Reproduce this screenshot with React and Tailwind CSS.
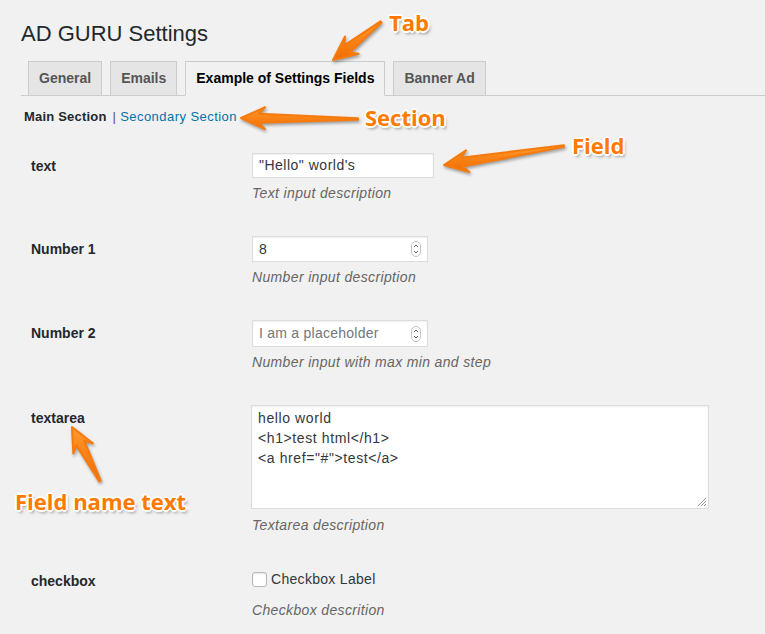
import React from 'react';

const font = 'font-["Liberation_Sans",Arial,sans-serif]';
const noteText =
	'absolute font-["Open_Sans",sans-serif] font-bold text-[22px] leading-none text-[#ff7a00] [text-shadow:1px_1px_0_#fff,-1px_-1px_0_#fff,1px_-1px_0_#fff,-1px_1px_0_#fff,0_2px_0_#fff,2px_0_0_#fff,0_-2px_0_#fff,-2px_0_0_#fff,2px_3px_3px_rgba(0,0,0,0.35)]';

// tapered arrow from a thin tail to a swept head at the tip
function arrowPoints(tx, ty, px, py) {
	const dx = px - tx;
	const dy = py - ty;
	const len = Math.hypot(dx, dy);
	const ux = dx / len;
	const uy = dy / len;
	const nx = -uy;
	const ny = ux;
	const L = 18, H = 11, S = 4.5, T = 0.8, back = 6;
	const pts = [
		[tx + nx * T, ty + ny * T],
		[px - ux * L + nx * S, py - uy * L + ny * S],
		[px - ux * (L + back) + nx * H, py - uy * (L + back) + ny * H],
		[px, py],
		[px - ux * (L + back) - nx * H, py - uy * (L + back) - ny * H],
		[px - ux * L - nx * S, py - uy * L - ny * S],
		[tx - nx * T, ty - ny * T],
	];
	return pts.map(p => p.map(v => v.toFixed(1)).join(',')).join(' ');
}

const arrows = [
	[381, 22, 333, 60],
	[358, 119, 241, 118],
	[564, 146, 444, 165],
	[100, 481, 72, 427],
];

function Spinner() {
	return (
		<svg width="10" height="16" viewBox="0 0 10 16" className="shrink-0">
			<rect x="0.5" y="0.5" width="9" height="15" rx="4.5" fill="#fff" stroke="#c4c4c4" />
			<path d="M3 6 L5 4 L7 6" fill="none" stroke="#666" strokeWidth="1" />
			<path d="M3 10 L5 12 L7 10" fill="none" stroke="#666" strokeWidth="1" />
		</svg>
	);
}

function Desc({ children, className = 'mt-[5px]' }) {
	return <p className={`${className} leading-[20px] text-[14px] italic text-[#666] tracking-[0.35px]`}>{children}</p>;
}

function Row({ label, top, children }) {
	return (
		<div className={`flex ${top}`}>
			<div className="w-[221px] shrink-0 text-[14px] font-bold leading-[26px] text-[#23282d]">{label}</div>
			<div>{children}</div>
		</div>
	);
}

export default function App() {
	return (
		<div className={`relative min-h-screen w-full overflow-hidden bg-[#f1f1f1] ${font} text-[#23282d]`}>
			<h1 className="pl-[21px] pt-[19px] text-[22px] font-normal leading-[29px] text-[#23282d]">AD GURU Settings</h1>

			<nav className="ml-[21px] mt-[13px] flex gap-2 border-b border-[#ccc] pl-[7px]">
				{['General', 'Emails', 'Example of Settings Fields', 'Banner Ad'].map((t, i) => (
					<div
						key={t}
						className={
							i === 2
								? '-mb-px h-[35px] border border-[#ccc] border-b-[#f1f1f1] bg-[#f1f1f1] px-[10px] text-[14px] font-bold leading-[33px] text-black'
								: '-mb-px h-[35px] border border-[#ccc] bg-[#e5e5e5] px-[10px] text-[14px] font-bold leading-[33px] text-[#555]'
						}>
						{t}
					</div>
				))}
			</nav>

			<div className="ml-[24px] mt-[11px] text-[13px] leading-[20px] tracking-[0.2px]">
				<span className="font-bold text-[#23282d]">Main Section</span>
				<span className="ml-[6px] text-[#555]">|</span>
				<span className="ml-[4px] tracking-[0.45px] text-[#0073aa]">Secondary Section</span>
			</div>

			<div className="pl-[31px] pt-[26px]">
				<Row label="text" top="">
					<div className="flex h-[25px] w-[182px] items-center border border-[#ddd] bg-white px-[6px] text-[14px] tracking-[0.5px] text-[#32373c] shadow-[inset_0_1px_2px_rgba(0,0,0,0.07)]">
						"Hello" world's
					</div>
					<Desc>Text input description</Desc>
				</Row>

				<Row label="Number 1" top="pt-[33px]">
					<div className="flex h-[26px] w-[176px] items-center justify-between border border-[#ddd] bg-white pl-[6px] pr-[6px] text-[14px] text-[#32373c] shadow-[inset_0_1px_2px_rgba(0,0,0,0.07)]">
						<span>8</span>
						<Spinner />
					</div>
					<Desc>Number input description</Desc>
				</Row>

				<Row label="Number 2" top="pt-[33px]">
					<div className="flex h-[27px] w-[176px] items-center justify-between border border-[#ddd] bg-white pl-[6px] pr-[6px] text-[14px] tracking-[0.25px] text-[#72777c] shadow-[inset_0_1px_2px_rgba(0,0,0,0.07)]">
						<span>I am a placeholder</span>
						<Spinner />
					</div>
					<Desc>Number input with max min and step</Desc>
				</Row>

				<Row label="textarea" top="pt-[33px]">
					<div className="relative -ml-px h-[104px] w-[458px] border border-[#ddd] bg-white px-[6px] py-[2px] text-[14px] leading-[20px] tracking-[0.6px] text-[#32373c] shadow-[inset_0_1px_2px_rgba(0,0,0,0.07)]">
						<div>hello world</div>
						<div>{'<h1>test html</h1>'}</div>
						<div>{'<a href="#">test</a>'}</div>
						<svg width="11" height="11" viewBox="0 0 11 11" className="absolute bottom-[1px] right-[1px]">
							<path d="M10 2 L2 10 M10 5 L5 10 M10 8 L8 10" stroke="#999" strokeWidth="1" />
						</svg>
					</div>
					<Desc className="mt-[6px]">Textarea description</Desc>
				</Row>

				<Row label="checkbox" top="pt-[33px]">
					<div className="flex h-[22px] items-center gap-[4px] text-[14px] text-[#32373c]">
						<span className="block h-[15px] w-[15px] rounded-[3px] border border-[#b4b9be] bg-white shadow-[inset_0_1px_2px_rgba(0,0,0,0.1)]" />
						<span className="tracking-[0.3px]">Checkbox Label</span>
					</div>
					<Desc className="mt-[10px]">Checkbox descrition</Desc>
				</Row>
			</div>

			<svg className="pointer-events-none absolute left-0 top-0 drop-shadow-[1px_2px_1.5px_rgba(0,0,0,0.35)]" width="765" height="634">
				<defs>
					<linearGradient id="orange" x1="0" y1="0" x2="0" y2="1">
						<stop offset="0" stopColor="#ff9a2e" />
						<stop offset="1" stopColor="#f26b00" />
					</linearGradient>
				</defs>
				{arrows.map((a, i) => (
					<polygon key={i} points={arrowPoints(...a)} fill="url(#orange)" stroke="#f77a0c" strokeWidth="2" strokeLinejoin="round" />
				))}
			</svg>

			<div className={`${noteText} left-[389px] top-[11px]`}>Tab</div>
			<div className={`${noteText} left-[365px] top-[106px]`}>Section</div>
			<div className={`${noteText} left-[572px] top-[134px]`}>Field</div>
			<div className={`${noteText} left-[15px] top-[490px]`}>Field name text</div>
		</div>
	);
}
